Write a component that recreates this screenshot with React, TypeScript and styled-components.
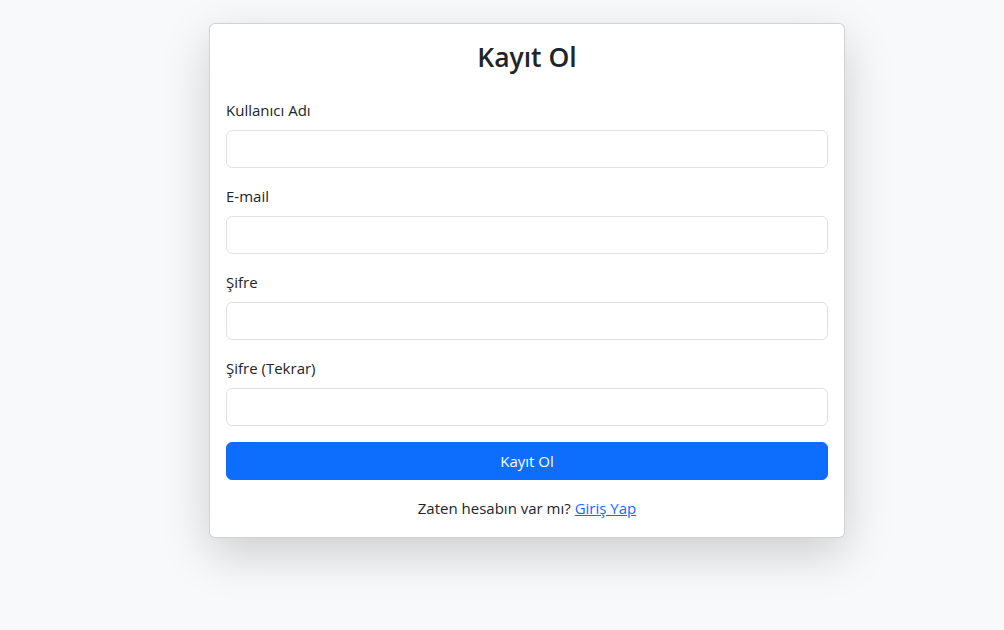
import React from "react";
import styled, { createGlobalStyle } from "styled-components";

const GlobalStyle = createGlobalStyle`
  html, body {
    margin: 0;
    padding: 0;
    background: #f8f9fa;
  }
  body {
    font-family: "Open Sans", "Noto Sans", "Liberation Sans", sans-serif;
    font-size: 16px;
    line-height: 1.5;
    color: #212529;
  }
  * { box-sizing: border-box; }
`;

const Page = styled.div`
  min-height: 630px;
  padding: 23px 0 0 209px;
`;

const Card = styled.div`
  width: 636px;
  background: #fff;
  border: 1px solid rgba(0, 0, 0, 0.175);
  border-radius: 6px;
  box-shadow: 0 16px 48px rgba(0, 0, 0, 0.175);
`;

const CardBody = styled.form`
  padding: 16px 16px 17px;
  display: flex;
  flex-direction: column;
`;

const Title = styled.h3`
  margin: 0 0 24px;
  font-size: 26.5px;
  line-height: 34px;
  font-weight: 600;
  text-align: center;
  color: #212529;
`;

const Field = styled.div`
  margin-bottom: 16px;
  display: flex;
  flex-direction: column;
`;

const Label = styled.label`
  display: block;
  margin-bottom: 8px;
  font-size: 15px;
  line-height: 24px;
`;

const Input = styled.input`
  display: block;
  width: 100%;
  height: 38px;
  padding: 6px 12px;
  font: inherit;
  color: #212529;
  background: #fff;
  border: 1px solid #dee2e6;
  border-radius: 6px;
  outline: none;
`;

const Button = styled.button`
  width: 100%;
  height: 38px;
  padding: 6px 12px;
  font: inherit;
  font-size: 15px;
  color: #fff;
  background: #0d6efd;
  border: 1px solid #0d6efd;
  border-radius: 6px;
  cursor: pointer;
`;

const Footer = styled.p`
  margin: 16px 0 0;
  text-align: center;
  font-size: 15px;
  line-height: 24px;
`;

const Link = styled.a`
  color: #0d6efd;
  text-decoration: underline;
`;

const fields = [
  { id: "username", label: "Kullanıcı Adı", type: "text" },
  { id: "email", label: "E-mail", type: "email" },
  { id: "password", label: "Şifre", type: "password" },
  { id: "password2", label: "Şifre (Tekrar)", type: "password" },
];

export default function App() {
  return (
    <>
      <GlobalStyle />
      <Page>
        <Card>
          <CardBody onSubmit={(e) => e.preventDefault()}>
            <Title>Kayıt Ol</Title>
            {fields.map((f) => (
              <Field key={f.id}>
                <Label htmlFor={f.id}>{f.label}</Label>
                <Input id={f.id} type={f.type} />
              </Field>
            ))}
            <Button type="submit">Kayıt Ol</Button>
            <Footer>
              Zaten hesabın var mı? <Link href="#">Giriş Yap</Link>
            </Footer>
          </CardBody>
        </Card>
      </Page>
    </>
  );
}
